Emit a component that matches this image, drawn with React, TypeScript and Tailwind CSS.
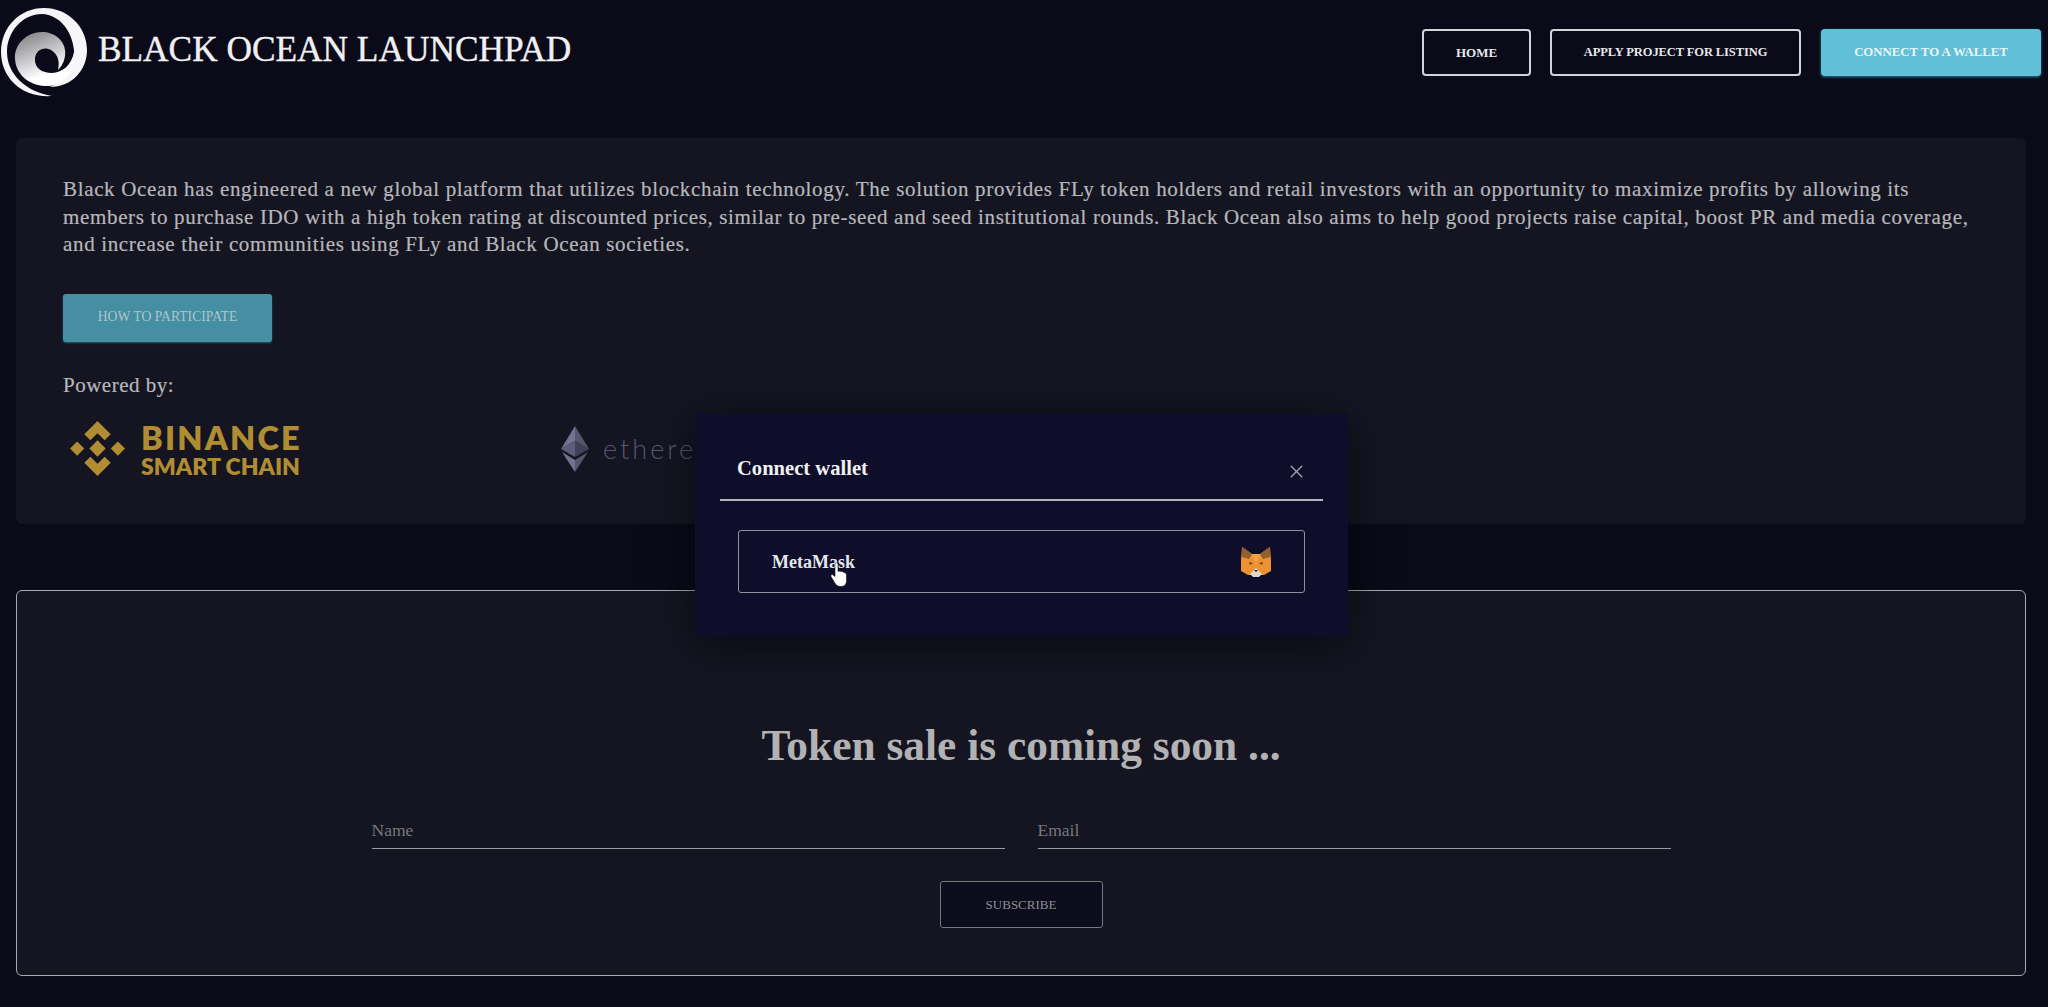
import { X } from "lucide-react";

const serif = "font-['Liberation_Serif',serif]";

function SwirlLogo() {
  return (
    <svg viewBox="0 0 88 100" className="w-[88px] h-[100px] shrink-0">
      <defs>
        <linearGradient id="swirl" x1="0" y1="0" x2="0.45" y2="1">
          <stop offset="0" stopColor="#77777b" />
          <stop offset="0.5" stopColor="#c6c6c8" />
          <stop offset="0.85" stopColor="#ffffff" />
        </linearGradient>
      </defs>
      <path
        d="M52 96C22 98 1 78 1 52C1 27 20 8 44 8C68 8 87 27 87 50C87 70 72 87 50 87C66 80 75 66 74 50C72 31 60 15 42 14C23 14 7 31 7 52C7 74 26 92 52 96Z"
        fill="#f6f6f8"
      />
      <path
        d="M15 59C14 44 27 32 42 32C54 32 64 40 65 50C66 58 63 65 58 70C60 62 58 54 51 50C44 46 36 50 35 58C34 68 42 73 52 73C63 72 71 66 74 52C76 72 62 87 45 86C28 85 16 74 15 59Z"
        fill="url(#swirl)"
      />
    </svg>
  );
}

function BinanceMark() {
  return (
    <svg viewBox="0 0 56 56" className="w-[57px] h-[57px] shrink-0" fill="#b08d33">
      <path d="M28 1L41 14L35 20L28 13L21 20L15 14Z" />
      <path d="M28 55L41 42L35 36L28 43L21 36L15 42Z" />
      <path d="M8 21L15 28L8 35L1 28Z" />
      <path d="M48 21L55 28L48 35L41 28Z" />
      <path d="M28 20L36 28L28 36L20 28Z" />
    </svg>
  );
}

function EthereumMark() {
  return (
    <svg viewBox="0 0 28 46" className="w-[28px] h-[46px] shrink-0">
      <path d="M14 0L0 23L14 15Z" fill="#72748f" />
      <path d="M14 0L28 23L14 15Z" fill="#55566f" />
      <path d="M14 15L0 23L14 31Z" fill="#5c5d78" />
      <path d="M14 15L28 23L14 31Z" fill="#41425a" />
      <path d="M1 26L14 46V34Z" fill="#72748f" />
      <path d="M27 26L14 46V34Z" fill="#55566f" />
    </svg>
  );
}

function FoxIcon() {
  return (
    <svg viewBox="0 0 32 32" className="w-[32px] h-[32px]">
      <path d="M2 1L12 8H20L30 1L31 14L31 25L24 29H8L1 25L1 14Z" fill="#ec9230" />
      <path d="M2 1L12 8L9 13L2 11Z" fill="#93612f" />
      <path d="M30 1L20 8L23 13L30 11Z" fill="#93612f" />
      <path d="M12 8H20L16 18Z" fill="#f2a548" />
      <path d="M9 16L13 17L10 19Z" fill="#6b431d" />
      <path d="M23 16L19 17L22 19Z" fill="#6b431d" />
      <path d="M10 28L16 22L22 28L19 31H13Z" fill="#dcd6cc" />
      <path d="M14 24H18L16 26Z" fill="#222" />
    </svg>
  );
}

function HandCursor() {
  return (
    <svg viewBox="0 0 18 26" className="absolute left-[58px] top-[12px] w-[18px] h-[27px]" fill="#ffffff" stroke="#111" strokeWidth="0.6">
      <path d="M6 1.5C7 1 8 1.5 8 3V10L9.5 9.5L11 10L12.5 10L14 11C15.5 11 16.5 12 16.5 14V19C16.5 22 15 25 11 25C7.5 25 6 23.5 4.5 21L1 15C0.5 13.5 2 12.5 3 13.5L5 15V3C5 2.3 5.4 1.8 6 1.5Z" />
    </svg>
  );
}

const navButton = "h-[47px] flex items-center justify-center rounded-[4px] border-2 border-[#d3d3da] text-[#e8e8ec] font-bold";

export default function App() {
  return (
    <div className={`relative h-[1007px] overflow-hidden bg-[#0a0a18] ${serif}`}>
      <header className="h-[138px] flex items-start justify-between pr-[7px]">
        <div className="flex items-start gap-[10px]">
          <SwirlLogo />
          <span className="mt-[29px] text-[35.3px] leading-[42px] text-[#f0f0f2] whitespace-nowrap [-webkit-text-stroke:0.4px]">BLACK OCEAN LAUNCHPAD</span>
        </div>
        <nav className="flex pt-[29px]">
          <button className={`${navButton} w-[109px] mr-[19px] text-[13px]`}>HOME</button>
          <button className={`${navButton} w-[251px] mr-[20px] text-[12.5px] tracking-[-0.1px]`}>APPLY PROJECT FOR LISTING</button>
          <button className="h-[47px] w-[220px] rounded-[4px] bg-[#62bfd8] text-[#e8f6fa] text-[12.8px] font-bold shadow-[0_1px_3px_#2a7f97]">
            CONNECT TO A WALLET
          </button>
        </nav>
      </header>

      <main className="pl-4 pr-[22px]">
        <section className="h-[386px] rounded-[6px] bg-[#151522] px-[47px] pt-[38px] text-[#b7b7bb]">
          <p className="text-[21px] leading-[27.5px] tracking-[0.66px] [-webkit-text-stroke:0.2px]">
            Black Ocean has engineered a new global platform that utilizes blockchain technology. The solution provides FLy token holders and retail investors with an opportunity to maximize profits by allowing its members to purchase IDO with a high token rating at discounted prices, similar to pre-seed and seed institutional rounds. Black Ocean also aims to help good projects raise capital, boost PR and media coverage, and increase their communities using FLy and Black Ocean societies.
          </p>
          <button className="mt-[35px] block h-[48px] w-[209px] rounded-[3px] bg-[#468ea1] text-[13.7px] text-[#a9c7cf] shadow-[0_1px_2px_#235f70]">
            HOW TO PARTICIPATE
          </button>
          <p className="mt-[30px] text-[21px] leading-[27px] tracking-[0.5px] [-webkit-text-stroke:0.2px]">Powered by:</p>
          <div className="mt-[20px] flex items-center">
            <div className="flex items-center gap-[15px] w-[498px] pl-[6px]">
              <BinanceMark />
              <div className="font-['Lato',sans-serif] font-extrabold text-[#b08d33] flex flex-col mt-[2px]">
                <span className="text-[32.5px] leading-[33px] tracking-[2.2px]">BINANCE</span>
                <span className="text-[23px] leading-[25px]">SMART CHAIN</span>
              </div>
            </div>
            <div className="flex items-center gap-[14px]">
              <EthereumMark />
              <span className="font-['Lato',sans-serif] font-light text-[#55566f] text-[27px] tracking-[3px] mt-[2px]">ethereum</span>
            </div>
          </div>
        </section>

        <section className="mt-[66px] h-[386px] rounded-[6px] border border-[#a9a9b0] bg-[#151522] pt-[129px] flex flex-col items-center">
          <h1 className="text-[43.4px] leading-[50px] font-bold text-[#b2b2b2]">Token sale is coming soon ...</h1>
          <form className="mt-[43px] w-[1299px] flex gap-[33px]">
            <label className="flex-1 h-[36px] border-b border-[#9a9aa0] text-[17.5px] leading-[34px] text-[#77777d]">Name</label>
            <label className="flex-1 h-[36px] border-b border-[#9a9aa0] text-[17.5px] leading-[34px] text-[#77777d]">Email</label>
          </form>
          <button className="mt-[32px] h-[47px] w-[163px] rounded-[3px] border border-[#77777e] bg-[#0c0c1c] text-[13px] text-[#8f8f95]">
            SUBSCRIBE
          </button>
        </section>
      </main>

      {/* wallet modal */}
      <div className="absolute left-[695px] top-[413px] w-[653px] h-[224px] bg-[#0e0e2a] px-[25px] shadow-[0_8px_40px_rgba(0,0,0,0.55)]">
        <div className="h-[88px] border-b-2 border-[#b4b4c0] flex items-center justify-between pl-[17px] pr-[16px] pt-[24px]">
          <h2 className="text-[20.6px] font-bold text-[#f0f0f2]">Connect wallet</h2>
          <X className="w-[21px] h-[21px] text-[#a8a8b2] mt-[6px]" strokeWidth={1.5} />
        </div>
        <div className="mx-[18px] mt-[29px] h-[63px] rounded-[3px] border border-[#8f8f9e] flex items-center justify-between pl-[33px] pr-[32px]">
          <span className="relative text-[18px] font-bold text-[#e6e6ea] mt-[2px]">
            MetaMask
            <HandCursor />
          </span>
          <FoxIcon />
        </div>
      </div>
    </div>
  );
}
